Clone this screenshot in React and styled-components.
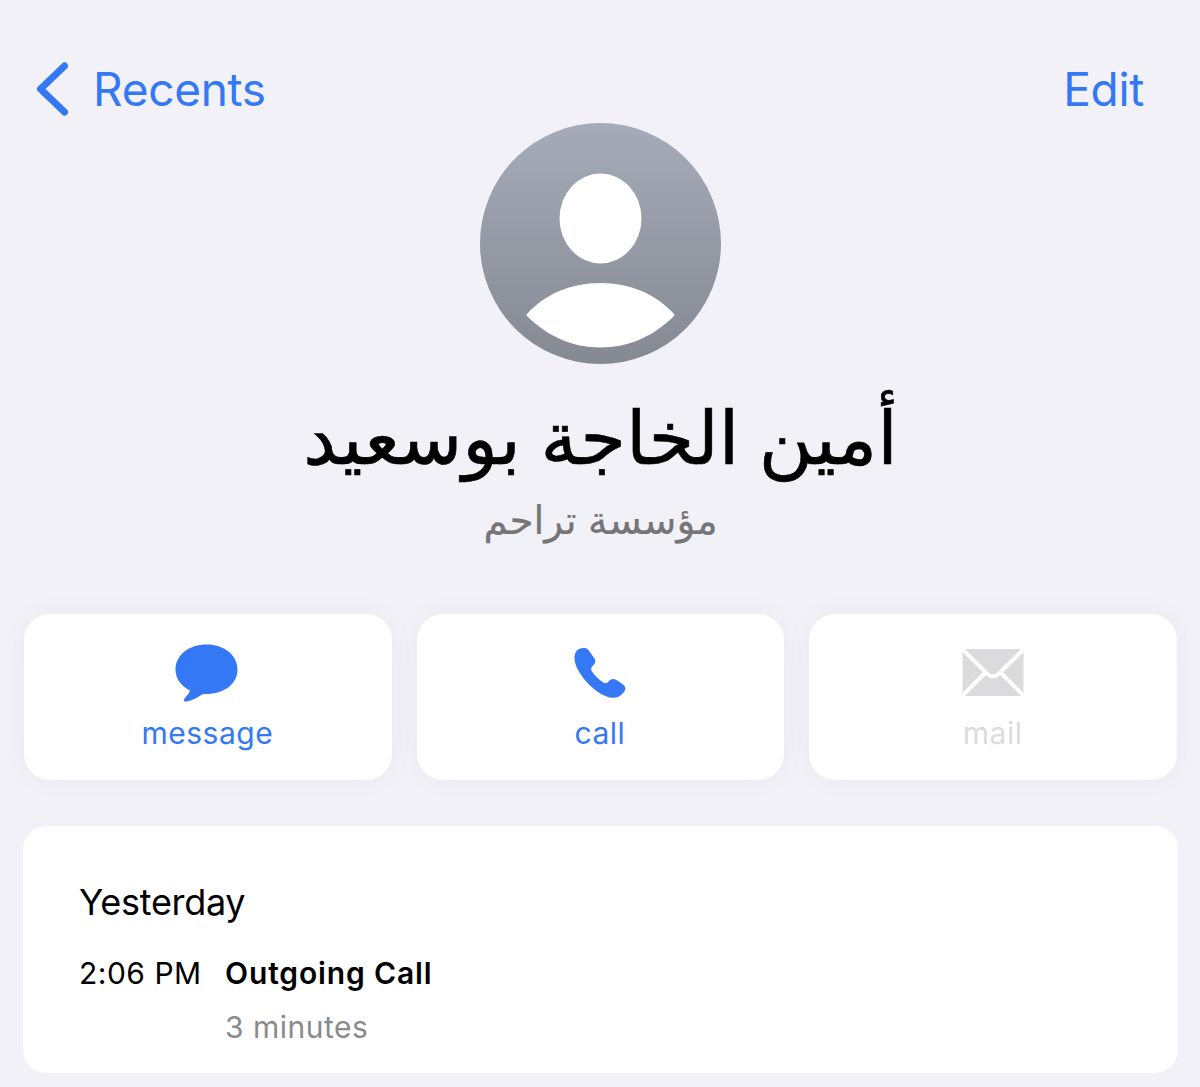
import React from 'react';
import styled, { createGlobalStyle } from 'styled-components';

const GlobalStyle = createGlobalStyle`
  * {
    margin: 0;
    padding: 0;
    box-sizing: border-box;
  }

  body {
    background: #f2f1f7;
    font-family: Inter, 'Liberation Sans', sans-serif;
  }
`;

const Screen = styled.div`
  width: 1200px;
  height: 1087px;
  overflow: hidden;
  background: #f2f1f7;
  padding: 55px 22px 0 23px;
`;

const NavBar = styled.nav`
  display: flex;
  justify-content: space-between;
  align-items: center;
  height: 67px;
  padding: 0 34px 0 13px;
`;

const NavButton = styled.button`
  display: flex;
  align-items: center;
  gap: 23px;
  border: none;
  background: none;
  color: #3478f6;
  font-family: inherit;
  font-size: 46px;
  line-height: 56px;
  letter-spacing: -0.3px;
`;

const Profile = styled.header`
  display: flex;
  flex-direction: column;
  align-items: center;
  height: 492px;
  padding-top: 1px;

  svg {
    display: block;
    flex: none;
  }
`;

const Name = styled.h1`
  margin-top: 24px;
  height: 100px;
  line-height: 100px;
  font-family: 'DejaVu Sans', sans-serif;
  font-size: 74px;
  font-weight: 400;
  word-spacing: -4px;
  white-space: nowrap;
  -webkit-text-stroke: 0.6px currentColor;
`;

const Company = styled.p`
  height: 60px;
  margin-top: 3px;
  line-height: 60px;
  color: #757577;
  font-family: 'DejaVu Sans', sans-serif;
  font-size: 39px;
  word-spacing: -1px;
  white-space: nowrap;
  -webkit-text-stroke: 0.2px currentColor;
`;

const Actions = styled.div`
  display: grid;
  grid-template-columns: repeat(3, 1fr);
  gap: 25px;
  padding: 0 1px;
`;

const Action = styled.button`
  display: flex;
  flex-direction: column;
  align-items: center;
  height: 166px;
  padding: 26px 1px 0 0;
  border: none;
  border-radius: 26px;
  background: #fff;
  box-shadow: 0 0 30px rgba(0, 0, 0, 0.035);
  color: ${props => (props.$disabled ? '#dbdbdd' : '#3478f6')};
  font-family: inherit;
  font-size: 30px;
  line-height: 40px;
  letter-spacing: 0.5px;

  svg {
    display: block;
    flex: none;
    margin-bottom: 9px;
  }
`;

const HistoryCard = styled.section`
  height: 247px;
  margin-top: 46px;
  padding: 52px 57px 0 56px;
  border-radius: 23px;
  background: #fff;
`;

const Day = styled.h2`
  font-size: 36px;
  font-weight: 400;
  line-height: 48px;
  letter-spacing: -0.3px;
`;

const CallRow = styled.div`
  display: grid;
  grid-template-columns: 146px 1fr;
  margin-top: 27px;
  font-size: 30px;
  line-height: 40px;
  letter-spacing: 0.5px;
  white-space: nowrap;
`;

const CallType = styled.p`
  font-weight: 600;
  letter-spacing: 0.85px;
`;

const Duration = styled.p`
  grid-column: 2;
  margin-top: 14px;
  color: #8a8a8e;
`;

const BackIcon = () => (
  <svg width="34" height="56" viewBox="0 0 34 56" fill="none">
    <path d="M28.500 5 4.500 28 28.500 51" stroke="currentColor" strokeWidth="7" strokeLinecap="round" strokeLinejoin="round" />
  </svg>
);

const Avatar = () => (
  <svg width="241" height="241" viewBox="0 0 241 241">
    <defs>
      <linearGradient id="avatar" x1="0" y1="0" x2="0" y2="1">
        <stop offset="0" stopColor="#a6abb9" />
        <stop offset="1" stopColor="#858992" />
      </linearGradient>
    </defs>
    <circle cx="120.5" cy="120.5" r="120.5" fill="url(#avatar)" />
    <ellipse cx="120.5" cy="95.5" rx="41" ry="45" fill="#fff" />
    <path d="M47 191C65 171 91 160 120.500 160S176 171 194 191Q195 192 194 193C174 213 149 224.500 120.500 224.500S67 213 47 193Q46 192 47 191Z" fill="#fff" />
  </svg>
);

const MessageIcon = () => (
  <svg width="64" height="64" viewBox="0 0 64 64" fill="currentColor">
    <path d="M31.500 4.500C14 4.500.5 15 .5 29.500.5 38.500 6 46 15 50.500 14.500 52.500 12.500 55 10 58 8 60.500 8.500 62 12 61.500 18 60.500 23 57 28 54 48 55 62.500 44.500 62.500 29.500 62.500 15 49 4.500 31.500 4.500Z" />
  </svg>
);

const PhoneIcon = () => (
  <svg width="64" height="64" viewBox="0 0 64 64" fill="currentColor">
    <path d="M15.500 8C18 7.500 20 9 21.500 11.500L26.500 18.500C28 21 27.500 23 25 25.500 23 27.500 22.500 29 24 31.500 26.500 35.500 31 40 35.500 42.500 37 43.500 38.500 43.500 40 42 42.500 39 45 38 48.500 40L55 44.500C58 47 58 49 56 52 50 60 41 59.500 30 52 22 46.500 14 38 9.500 29 5 20 5.500 11.500 11 9 12.500 8.200 14 8 15.500 8Z" />
  </svg>
);

const MailIcon = () => (
  <svg width="64" height="64" viewBox="0 0 64 64">
    <rect x="1.5" y="9" width="61" height="47" rx="4" fill="currentColor" />
    <path d="M1 9 25.500 33Q32 40 38.500 33L63 9M1 56 24 33M63 56 40 33" fill="none" stroke="#fff" strokeWidth="4" />
  </svg>
);

const App = () => (
  <>
    <GlobalStyle />
    <Screen>
      <NavBar>
        <NavButton><BackIcon />Recents</NavButton>
        <NavButton>Edit</NavButton>
      </NavBar>
      <Profile>
        <Avatar />
        <Name lang="ar" dir="rtl">أمين الخاجة بوسعيد</Name>
        <Company lang="ar" dir="rtl">مؤسسة تراحم</Company>
      </Profile>
      <Actions>
        <Action><MessageIcon />message</Action>
        <Action><PhoneIcon />call</Action>
        <Action $disabled><MailIcon />mail</Action>
      </Actions>
      <HistoryCard>
        <Day>Yesterday</Day>
        <CallRow>
          <p>2:06 PM</p>
          <CallType>Outgoing Call</CallType>
          <Duration>3 minutes</Duration>
        </CallRow>
      </HistoryCard>
    </Screen>
  </>
);

export default App;
